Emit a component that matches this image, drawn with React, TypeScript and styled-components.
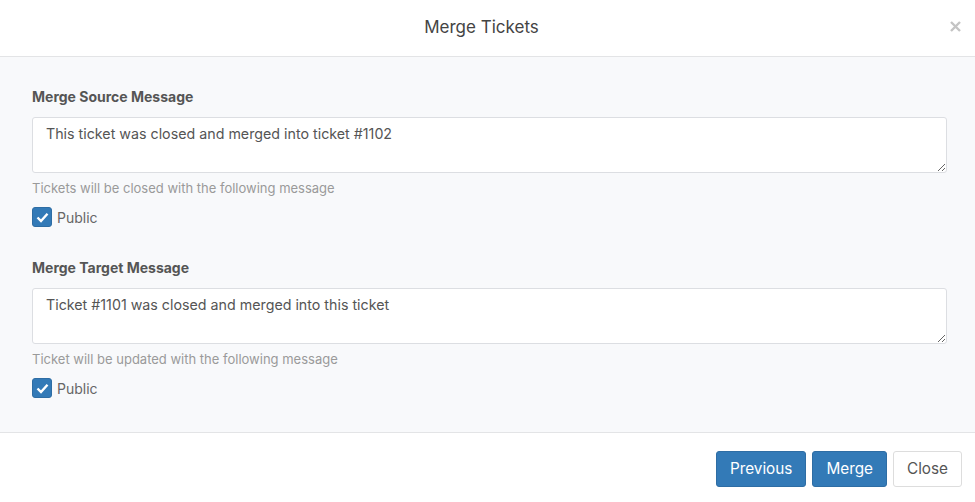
import React, { useState } from 'react'
import styled, { createGlobalStyle } from 'styled-components'

const GlobalStyle = createGlobalStyle`
    html, body {
        margin: 0;
        padding: 0;
        background: #fff;
        font-family: Inter, 'Noto Sans', sans-serif;
    }
    * {
        box-sizing: border-box;
    }
`

const Modal = styled.div`
    width: 975px;
    height: 502px;
    display: flex;
    flex-direction: column;
    background: #fff;
`

const Header = styled.div`
    height: 57px;
    display: flex;
    align-items: center;
    justify-content: center;
    position: relative;
    padding-right: 12px;
    border-bottom: 1px solid #e3e4e6;
`

const Title = styled.h4`
    margin: 0;
    font-size: 17px;
    font-weight: 400;
    color: #444;
    padding-bottom: 3px;
`

const CloseX = styled.button`
    position: absolute;
    right: 13px;
    top: 19px;
    border: none;
    background: none;
    padding: 0;
    width: 14px;
    height: 14px;
    cursor: pointer;
    display: flex;
    align-items: center;
    justify-content: center;
`

const Body = styled.div`
    flex: 1;
    background: #f8f9fb;
    padding: 30px 28px 0 32px;
    border-bottom: 1px solid #e3e4e6;
`

const Group = styled.div`
    margin-bottom: 31px;
`

const Label = styled.label`
    display: block;
    font-size: 14px;
    font-weight: 700;
    color: #555;
    line-height: 20px;
    margin-bottom: 10px;
`

const TextArea = styled.textarea`
    display: block;
    width: 915px;
    height: 56px;
    border: 1px solid #dcdee2;
    border-radius: 3px;
    background: #fff;
    padding: 7px 13px;
    font-family: Inter, 'Noto Sans', sans-serif;
    font-size: 14.25px;
    color: #555;
    line-height: 18px;
    resize: vertical;
    outline: none;
`

const Help = styled.div`
    font-size: 13px;
    color: #9a9a9a;
    line-height: 16px;
    margin-top: 7px;
`

const CheckRow = styled.label`
    display: flex;
    align-items: center;
    gap: 5px;
    margin-top: 11px;
    font-size: 14px;
    color: #666;
    cursor: pointer;
`

const Box = styled.span<{ $checked: boolean }>`
    width: 20px;
    height: 20px;
    border-radius: 3px;
    background: ${(p) => (p.$checked ? '#337ab7' : '#fff')};
    border: 1px solid ${(p) => (p.$checked ? '#2e6da4' : '#ccc')};
    display: flex;
    align-items: center;
    justify-content: center;
`

const Footer = styled.div`
    height: 69px;
    display: flex;
    align-items: center;
    justify-content: flex-end;
    gap: 6px;
    padding: 2px 13px 0 0;
`

const Button = styled.button<{ $primary?: boolean }>`
    height: 36px;
    padding: 0 13px;
    font-family: Inter, 'Noto Sans', sans-serif;
    font-size: 15.3px;
    border-radius: 3px;
    cursor: pointer;
    background: ${(p) => (p.$primary ? '#337ab7' : '#fff')};
    color: ${(p) => (p.$primary ? '#fff' : '#555')};
    border: 1px solid ${(p) => (p.$primary ? '#2e6da4' : '#ddd')};
`

const Check = ({ checked, onToggle }: { checked: boolean; onToggle: () => void }) => (
    <CheckRow onClick={onToggle}>
        <Box $checked={checked}>
            {checked && (
                <svg width="13" height="11" viewBox="0 0 13 11">
                    <path d="M1.5 5.5 L5 9 L11.5 1.8" fill="none" stroke="#fff" strokeWidth="2.4" />
                </svg>
            )}
        </Box>
        Public
    </CheckRow>
)

export default function App() {
    const [sourcePublic, setSourcePublic] = useState(true)
    const [targetPublic, setTargetPublic] = useState(true)

    return (
        <>
            <GlobalStyle />
            <Modal>
                <Header>
                    <Title>Merge Tickets</Title>
                    <CloseX aria-label="Close">
                        <svg width="11" height="11" viewBox="0 0 11 11">
                            <path d="M1 1 L10 10 M10 1 L1 10" stroke="#c4c4c4" strokeWidth="2.4" />
                        </svg>
                    </CloseX>
                </Header>
                <Body>
                    <Group>
                        <Label>Merge Source Message</Label>
                        <TextArea defaultValue="This ticket was closed and merged into ticket #1102" />
                        <Help>Tickets will be closed with the following message</Help>
                        <Check checked={sourcePublic} onToggle={() => setSourcePublic(!sourcePublic)} />
                    </Group>
                    <Group>
                        <Label>Merge Target Message</Label>
                        <TextArea defaultValue="Ticket #1101 was closed and merged into this ticket" />
                        <Help>Ticket will be updated with the following message</Help>
                        <Check checked={targetPublic} onToggle={() => setTargetPublic(!targetPublic)} />
                    </Group>
                </Body>
                <Footer>
                    <Button $primary>Previous</Button>
                    <Button $primary>Merge</Button>
                    <Button>Close</Button>
                </Footer>
            </Modal>
        </>
    )
}
